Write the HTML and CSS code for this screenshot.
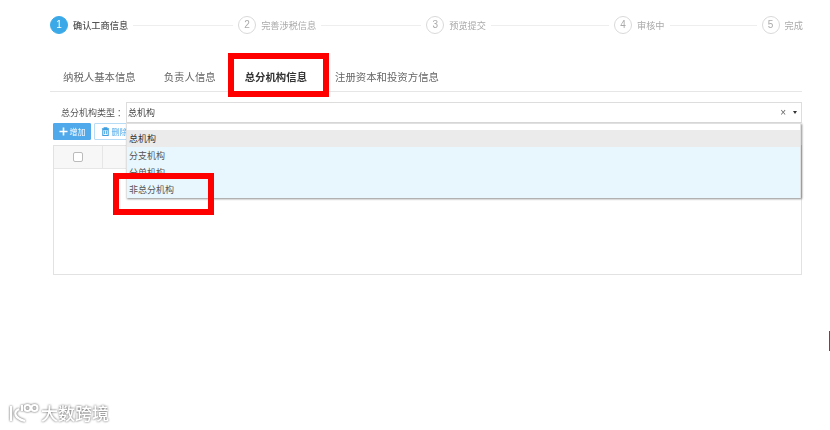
FILE: index.html
```html
<!DOCTYPE html>
<html lang="zh-CN">
<head>
<meta charset="utf-8">
<title>总分机构信息</title>
<link rel="stylesheet" href="styles.css">
</head>
<body>
<div class="page">
  <div class="steps soft">
    <div class="num active">1</div><span class="label label-active">确认工商信息</span><i class="line l1"></i>
    <div class="num">2</div><span class="label">完善涉税信息</span><i class="line l2"></i>
    <div class="num">3</div><span class="label">预览提交</span><i class="line l3"></i>
    <div class="num">4</div><span class="label">审核中</span><i class="line l4"></i>
    <div class="num">5</div><span class="label">完成</span>
  </div>
  <div class="tabs soft">
    <span class="tab t1">纳税人基本信息</span>
    <span class="tab t2">负责人信息</span>
    <span class="tab t3 current">总分机构信息</span>
    <span class="tab">注册资本和投资方信息</span>
  </div>
  <div class="form-row soft">
    <span class="form-label">总分机构类型<span class="colon">：</span></span>
    <div class="select">
      <span class="value">总机构</span>
      <span class="clear">×</span>
      <span class="caret"></span>
    </div>
  </div>
  <div class="toolbar soft">
    <button class="btn btn-add"><svg class="ico" viewBox="0 0 10 10"><path d="M5 0.5v9M0.5 5h9" stroke="#fff" stroke-width="1.8"/></svg>增加</button>
    <button class="btn btn-del"><svg class="ico" viewBox="0 0 10 10"><path d="M1 2h8M3.5 2V1h3v1M2 3h6v6.5H2z" fill="none" stroke="#3d9ee0" stroke-width="1.2"/><path d="M4 4v4M6 4v4" stroke="#3d9ee0"/></svg>删除</button>
  </div>
  <div class="table">
    <div class="thead">
      <div class="th-check"><span class="checkbox"></span></div>
    </div>
  </div>
  <ul class="menu">
    <li class="opt opt-selected">总机构</li>
    <li class="opt">分支机构</li>
    <li class="opt">分单机构</li>
    <li class="opt">非总分机构</li>
  </ul>
  <div class="mark mark-tab"></div>
  <div class="mark mark-opt"></div>
  <div class="sliver"></div>
  <div class="logo">
    <svg class="logo-ico" viewBox="0 0 32 20"><g fill="none" stroke="#fff" stroke-width="2.2"><path d="M3 3v15M11 6C5 9 6 15 17 18M14 2v6"/><circle cx="19.5" cy="5" r="3"/><circle cx="26.5" cy="5" r="3"/></g></svg>
    <span class="logo-text">大数跨境</span>
  </div>
</div>
</body>
</html>
```
FILE: styles.css
```css
* { box-sizing: border-box; }
html, body { margin: 0; padding: 0; background: #fff; }
body { font-family: "Noto Sans CJK SC", "Liberation Sans", sans-serif; overflow: hidden; }
.page { position: relative; width: 830px; height: 430px; padding: 16px 26px 0 50px; overflow: hidden; }
.soft { filter: blur(0.3px); }

.steps { display: flex; align-items: center; height: 18px; width: 760px; }
.num { flex: none; width: 18px; height: 18px; border: 1px solid #d9d9d9; border-radius: 50%; font: 10px/16px "Liberation Sans", sans-serif; color: #aaa; text-align: center; }
.num.active { background: #3ba9e8; border-color: #3ba9e8; color: #fff; }
.label { flex: none; margin-left: 5px; font-size: 9.2px; color: #aaa; white-space: nowrap; }
.label-active { color: #555; font-weight: 500; }
.line { flex: none; height: 1px; margin: 0 5px; background: #eee; }
.l1 { width: 100px; }
.l2 { width: 100px; }
.l3 { width: 118px; }
.l4 { width: 87px; }

.tabs { display: flex; align-items: center; height: 32px; margin-top: 26px; margin-right: 2px; padding: 2px 0 0 13px; border-bottom: 1px solid #e6e6e6; }
.tab { font-size: 10.4px; color: #666; white-space: nowrap; }
.t1 { margin-right: 28px; }
.t2 { margin-right: 29px; }
.t3 { margin-right: 28px; }
.current { color: #333; font-weight: 700; }

.form-row { display: flex; align-items: center; height: 21px; margin-top: 10px; margin-right: 2px; padding-left: 11px; }
.form-label { width: 65px; flex: none; font-size: 9px; color: #555; white-space: nowrap; }
.colon { margin-left: 2px; }
.select { flex: 1; height: 21px; display: flex; align-items: center; padding: 0 4px 0 1px; border: 1px solid #ddd; background: #fff; }
.value { flex: 1; font-size: 9px; color: #444; }
.clear { font: 10px/1 "Liberation Sans", sans-serif; color: #666; margin-right: 7px; }
.caret { width: 0; height: 0; border: 2.5px solid transparent; border-top: 3px solid #333; border-bottom: 0; }

.toolbar { display: flex; gap: 3px; margin: 0 0 5px 3px; height: 17px; }
.btn { display: flex; align-items: center; justify-content: center; gap: 2px; height: 17px; padding: 0; border-radius: 1px; font: 8px/1 "Noto Sans CJK SC", sans-serif; }
.btn-add { width: 38px; border: 1px solid #4fa9ea; background: #4fa9ea; color: #fff; }
.btn-del { width: 40px; border: 1px solid #b7dcf5; background: #fff; color: #4fa9ea; }
.ico { width: 9px; height: 9px; }

.table { width: 749px; height: 130px; margin-left: 3px; border: 1px solid #e2e2e2; }
.thead { height: 23px; background: #f7f7f7; border-bottom: 1px solid #e6e6e6; }
.th-check { display: flex; align-items: center; justify-content: center; width: 49px; height: 100%; border-right: 1px solid #e6e6e6; }
.checkbox { width: 10px; height: 10px; border: 1px solid #bbb; border-radius: 2px; background: #fff; }

.menu { position: absolute; left: 126px; top: 123px; width: 675px; height: 75px; margin: 0; padding: 6px 0 0; list-style: none; background: #fff; border: 1px solid #e0e0e0; box-shadow: 1px 1px 2px rgba(0,0,0,.45); }
.opt { height: 17px; padding-left: 2px; font-size: 9px; line-height: 17px; color: #555; background: #e8f7fe; }
.opt-selected { background: #ebebeb; color: #333; }

.mark { position: absolute; border: 6px solid #f00; }
.mark-tab { left: 228px; top: 53px; width: 101px; height: 44px; }
.mark-opt { left: 113px; top: 173px; width: 101px; height: 42px; }

.sliver { position: absolute; left: 829px; top: 331px; width: 1px; height: 20px; background: #a02a5a; }

.logo { position: absolute; left: 8px; top: 402px; display: flex; align-items: center; gap: 1px; filter: drop-shadow(0 0 1px #555); }
.logo-ico { width: 32px; height: 20px; }
.logo-text { font-size: 17px; line-height: 22px; color: #fff; font-weight: 500; white-space: nowrap; }
```
